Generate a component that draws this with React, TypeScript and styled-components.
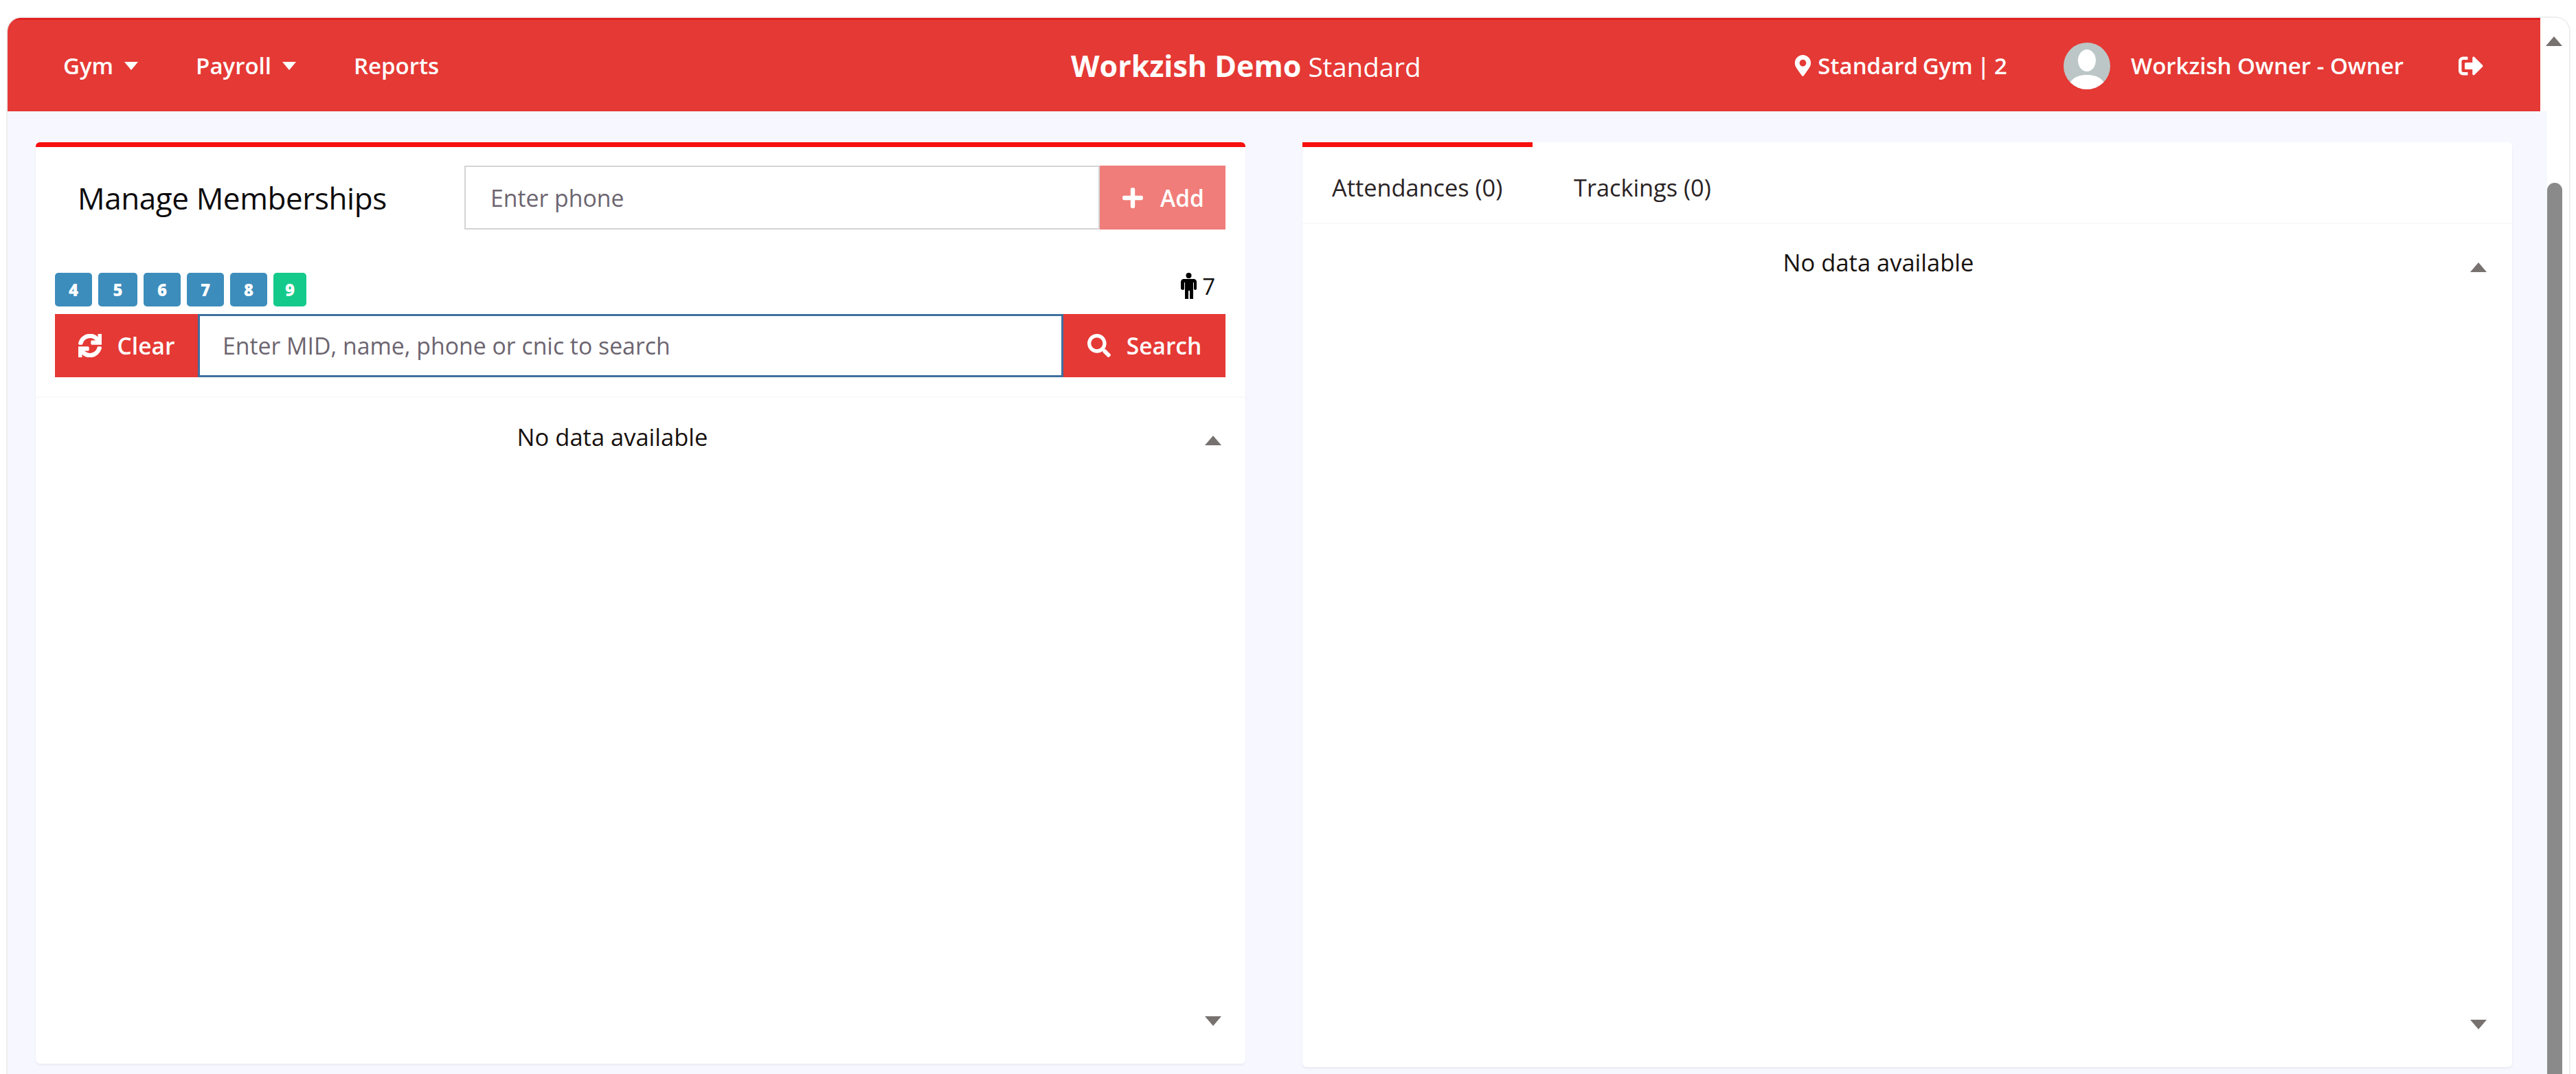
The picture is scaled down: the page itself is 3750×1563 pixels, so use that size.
import React from 'react';
import styled, { createGlobalStyle } from 'styled-components';
import { FaMapMarkerAlt, FaPlus, FaSearch, FaSignOutAlt, FaSync } from 'react-icons/fa';

const GlobalStyle = createGlobalStyle`
  html, body {
    margin: 0;
    padding: 0;
    height: 100%;
    background: #fff;
    overflow: hidden;
  }
  body {
    font-family: "Open Sans", "Noto Sans", "Liberation Sans", sans-serif;
    color: #1a1416;
  }
`;

const RED = '#e53935';
const PAGE_BG = '#f7f8ff';

// outer browser frame
const Frame = styled.div`
  box-sizing: border-box;
  display: flex;
  height: 1539px;
  margin: 24px 8px 0 9px;
  border: 2px solid #eeeef0;
  border-bottom: 0;
  border-radius: 22px 22px 0 0;
  overflow: hidden;
`;

const Main = styled.div`
  flex: 1;
  min-width: 0;
  display: flex;
  flex-direction: column;
  background: ${PAGE_BG};
`;

const Header = styled.header`
  box-sizing: border-box;
  height: 136px;
  flex-shrink: 0;
  display: flex;
  align-items: center;
  padding: 0 83px 0 81px;
  background: ${RED};
  border-top: 3px solid #e21f1f;
  color: #fff;
  font-size: 33px;
  font-weight: 600;
`;

const Nav = styled.nav`
  flex: 0 0 1467px;
  display: flex;
  align-items: center;
  gap: 84px;
`;

const NavItem = styled.span`
  display: inline-flex;
  align-items: center;
  gap: 16px;
`;

const Caret = styled.i`
  width: 0;
  height: 0;
  border-left: 10px solid transparent;
  border-right: 10px solid transparent;
  border-top: 12px solid #fff;
`;

const Brand = styled.div`
  font-size: 38.5px;
  font-weight: 400;
  white-space: nowrap;
  b {
    font-weight: 700;
    font-size: 43px;
  }
`;

const UserArea = styled.div`
  margin-left: auto;
  display: flex;
  align-items: center;
`;

const GymLabel = styled.span`
  display: inline-flex;
  align-items: center;
  gap: 6px;
  margin-right: 82px;
  white-space: nowrap;
  word-spacing: -2px;
`;

const Avatar = styled.svg`
  width: 68px;
  height: 68px;
  border-radius: 50%;
  margin-right: 30px;
`;

const OwnerName = styled.span`
  margin-right: 80px;
  white-space: nowrap;
`;

const Content = styled.main`
  flex: 1;
  display: flex;
  align-items: flex-start;
  gap: 83px;
  padding: 45px 41px 0;
`;

const Card = styled.section<{ $height: number; $accent?: boolean }>`
  box-sizing: border-box;
  flex: 1;
  min-width: 0;
  height: ${p => p.$height}px;
  display: flex;
  flex-direction: column;
  background: #fff;
  border-radius: 6px;
  box-shadow: 0 2px 3px rgba(60, 60, 90, 0.08);
  border-top: ${p => (p.$accent ? '7px solid #f80f0f' : '0')};
`;

const ManageRow = styled.div`
  display: flex;
  align-items: center;
  padding: 27px 29px 0 61px;
`;

const Title = styled.h2`
  flex: 0 0 563px;
  margin: 0;
  font-size: 44px;
  font-weight: 400;
  letter-spacing: -0.4px;
  color: #0c0a0c;
  white-space: nowrap;
`;

const InputGroup = styled.div<{ $height: number }>`
  flex: 1;
  display: flex;
  height: ${p => p.$height}px;
`;

const TextInput = styled.input<{ $focused?: boolean }>`
  box-sizing: border-box;
  flex: 1;
  min-width: 0;
  height: 100%;
  padding: 0 0 0 ${p => (p.$focused ? 33 : 36)}px;
  border: ${p => (p.$focused ? '3px solid #3f6f9f' : '2px solid #d4d4d6')};
  border-radius: 0;
  outline: none;
  background: #fff;
  font-family: inherit;
  font-size: 33.8px;
  &::placeholder {
    color: #6c6570;
    opacity: 1;
  }
`;

const ActionButton = styled.button<{ $faded?: boolean; $width: number }>`
  flex: 0 0 ${p => p.$width}px;
  display: flex;
  align-items: center;
  justify-content: center;
  gap: 23px;
  padding: 0;
  border: 0;
  background: ${p => (p.$faded ? '#f07d79' : RED)};
  color: #fff;
  font-family: inherit;
  font-size: 33.5px;
  font-weight: 600;
  svg {
    font-size: 34px;
  }
`;

const SyncIcon = styled(FaSync)`
  stroke: currentColor;
  stroke-width: 24;
`;

const BadgeRow = styled.div`
  display: flex;
  align-items: flex-start;
  justify-content: space-between;
  height: 49px;
  margin-top: 63px;
  padding: 0 44px 0 28px;
`;

const Badges = styled.div`
  display: flex;
  gap: 9px;
`;

const Badge = styled.span<{ $width: number; $active?: boolean }>`
  display: flex;
  align-items: center;
  justify-content: center;
  width: ${p => p.$width}px;
  height: 49px;
  border-radius: 5px;
  background: ${p => (p.$active ? '#14ca8b' : '#3c8dbc')};
  color: #fff;
  font-size: 24px;
  font-weight: 800;
`;

const HeadCount = styled.div`
  display: flex;
  align-items: center;
  gap: 8px;
  height: 38px;
  font-size: 33px;
  color: #111;
`;

const PersonIcon = styled.svg`
  width: 23px;
  height: 38px;
`;

const SearchRow = styled.div`
  padding: 11px 29px 0 28px;
`;

const TableBody = styled.div<{ $gap?: number }>`
  flex: 1;
  min-height: 0;
  display: flex;
  margin-top: ${p => p.$gap || 0}px;
  border-top: 2px solid #f9f9fb;
`;

const Message = styled.div<{ $offset: number }>`
  flex: 1;
  padding-top: ${p => p.$offset}px;
  text-align: center;
  font-size: 34.5px;
  line-height: 45px;
  color: #17110f;
`;

const SortColumn = styled.div<{ $width: number; $right: number; $top: number }>`
  box-sizing: border-box;
  flex: 0 0 ${p => p.$width}px;
  display: flex;
  flex-direction: column;
  align-items: center;
  justify-content: space-between;
  padding: ${p => p.$top}px ${p => p.$right}px 55px 0;
`;

const Arrow = styled.i<{ $down?: boolean }>`
  display: block;
  width: 0;
  height: 0;
  border-left: 12.5px solid transparent;
  border-right: 12.5px solid transparent;
  ${p => (p.$down ? 'border-top: 14px solid #77716f;' : 'border-bottom: 14px solid #77716f;')}
`;

const Tabs = styled.div`
  display: flex;
  height: 117px;
  flex-shrink: 0;
`;

const Tab = styled.div<{ $active?: boolean; $width: number; $left: number }>`
  box-sizing: border-box;
  width: ${p => p.$width}px;
  padding: 36px 0 0 ${p => p.$left}px;
  border-top: 7px solid ${p => (p.$active ? '#f80f0f' : 'transparent')};
  font-size: 34.3px;
  line-height: 45px;
  color: #2a2325;
  white-space: nowrap;
`;

const ScrollBar = styled.aside`
  flex: 0 0 42px;
  display: flex;
  flex-direction: column;
  background: #fff;
`;

const ScrollUp = styled.div`
  box-sizing: border-box;
  height: 136px;
  flex-shrink: 0;
  padding: 27px 0 0 8px;
`;

const ScrollTrack = styled.div`
  flex: 1;
  padding-top: 104px;
  border-left: 10px solid ${PAGE_BG};
`;

const ScrollThumb = styled.div`
  width: 22px;
  height: 100%;
  border-radius: 11px 11px 0 0;
  background: #8a8a8a;
`;

const badgeWidths = [
  { n: 4, width: 54 },
  { n: 5, width: 57 },
  { n: 6, width: 54 },
  { n: 7, width: 54 },
  { n: 8, width: 54 },
];

const App = () => {
  return (
    <>
      <GlobalStyle />
      <Frame>
        <Main>
          <Header>
            <Nav>
              <NavItem>Gym <Caret /></NavItem>
              <NavItem>Payroll <Caret /></NavItem>
              <NavItem>Reports</NavItem>
            </Nav>
            <Brand><b>Workzish Demo</b> Standard</Brand>
            <UserArea>
              <GymLabel><FaMapMarkerAlt size={31} /> Standard Gym | 2</GymLabel>
              <Avatar viewBox="0 0 68 68">
                <rect width="68" height="68" fill="#bcc6c6" />
                <ellipse cx="34" cy="26" rx="13" ry="16" fill="#fff" />
                <path d="M6 68c2-14 12-21 28-21s26 7 28 21z" fill="#fff" />
              </Avatar>
              <OwnerName>Workzish Owner - Owner</OwnerName>
              <FaSignOutAlt size={36} />
            </UserArea>
          </Header>
          <Content>
            <Card $height={1341} $accent>
              <ManageRow>
                <Title>Manage Memberships</Title>
                <InputGroup $height={93}>
                  <TextInput placeholder="Enter phone" />
                  <ActionButton $faded $width={183}><FaPlus /> Add</ActionButton>
                </InputGroup>
              </ManageRow>
              <BadgeRow>
                <Badges>
                  {badgeWidths.map(b => <Badge key={b.n} $width={b.width}>{b.n}</Badge>)}
                  <Badge $active $width={48}>9</Badge>
                </Badges>
                <HeadCount>
                  <PersonIcon viewBox="0 0 23 38">
                    <circle cx="11.5" cy="4" r="4" fill="#000" />
                    <path d="M4 9h15c2 0 4 2 4 4v10c0 1-1 2-2 2s-2-1-2-2v-9h-1v24h-5V26h-2v12H6V14H5v9c0 1-1 2-2 2s-3-1-3-2V13c0-2 2-4 4-4z" fill="#000" />
                  </PersonIcon>
                  7
                </HeadCount>
              </BadgeRow>
              <SearchRow>
                <InputGroup $height={92}>
                  <ActionButton $width={208}><SyncIcon /> Clear</ActionButton>
                  <TextInput $focused placeholder="Enter MID, name, phone or cnic to search" />
                  <ActionButton $width={236}><FaSearch /> Search</ActionButton>
                </InputGroup>
              </SearchRow>
              <TableBody $gap={28}>
                <Message $offset={34}>No data available</Message>
                <SortColumn $width={82} $right={12} $top={55}>
                  <Arrow />
                  <Arrow $down />
                </SortColumn>
              </TableBody>
            </Card>
            <Card $height={1346}>
              <Tabs>
                <Tab $active $width={335} $left={43}>Attendances (0)</Tab>
                <Tab $width={400} $left={60}>Trackings (0)</Tab>
              </Tabs>
              <TableBody>
                <Message $offset={33}>No data available</Message>
                <SortColumn $width={84} $right={14} $top={56}>
                  <Arrow />
                  <Arrow $down />
                </SortColumn>
              </TableBody>
            </Card>
          </Content>
        </Main>
        <ScrollBar>
          <ScrollUp><Arrow /></ScrollUp>
          <ScrollTrack><ScrollThumb /></ScrollTrack>
        </ScrollBar>
      </Frame>
    </>
  );
};

export default App;
